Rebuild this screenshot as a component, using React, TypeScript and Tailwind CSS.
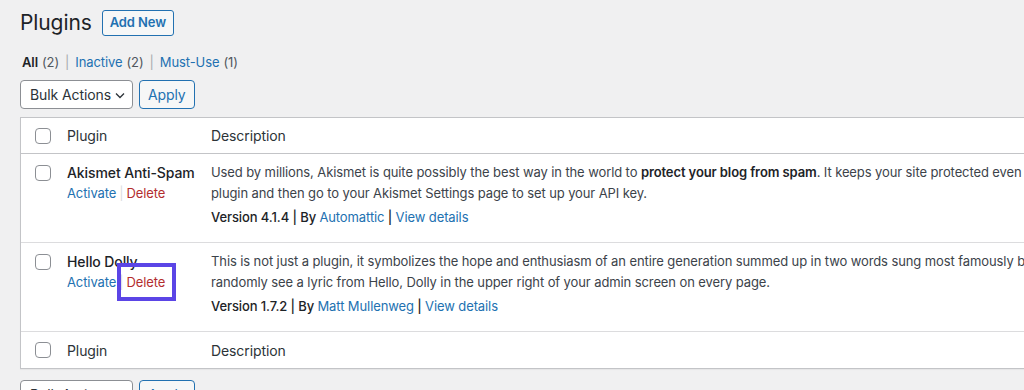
import React from "react";

const LINK = "text-[#2271b1]";

const Checkbox: React.FC = () => (
	<span className="block w-4 h-4 rounded-[4px] border border-[#8c8f94] bg-white" />
);

const BulkControls: React.FC = () => (
	<div className="flex items-center gap-[6px]">
		<div className="flex items-center justify-between w-[113px] h-[29px] pl-[9px] pr-[6px] bg-white border border-[#8c8f94] rounded-[4px] text-[14px] text-[#2c3338]">
			<span>Bulk Actions</span>
			<svg width="12" height="12" viewBox="0 0 12 12" fill="none" stroke="#2c3338" strokeWidth="1.3">
				<path d="M2 4.5 L6 8.5 L10 4.5" />
			</svg>
		</div>
		<button className="h-[29px] px-[8px] border border-[#2271b1] rounded-[4px] bg-[#f6f7f7] text-[14px] text-[#2271b1]">
			Apply
		</button>
	</div>
);

type PluginRow = {
	name: string;
	lines: React.ReactNode[];
	version: string;
	author: string;
	highlight?: boolean;
};

const plugins: PluginRow[] = [
	{
		name: "Akismet Anti-Spam",
		lines: [
			<>
				Used by millions, Akismet is quite possibly the best way in the world to{" "}
				<strong className="font-semibold text-[#1d2327]">protect your blog from spam</strong>. It keeps your site protected even when you sleep. To get started: activate the Akismet
			</>,
			<>plugin and then go to your Akismet Settings page to set up your API key.</>,
		],
		version: "4.1.4",
		author: "Automattic",
	},
	{
		name: "Hello Dolly",
		lines: [
			<>This is not just a plugin, it symbolizes the hope and enthusiasm of an entire generation summed up in two words sung most famously by Louis Armstrong: Hello, Dolly. When activated you will</>,
			<>randomly see a lyric from Hello, Dolly in the upper right of your admin screen on every page.</>,
		],
		version: "1.7.2",
		author: "Matt Mullenweg",
		highlight: true,
	},
];

const HeaderRow: React.FC<{ top?: boolean }> = ({ top }) => (
	<div className={`flex h-[36px] items-center text-[14px] text-[#2c3338] ${top ? "border-b border-[#c3c4c7]" : ""}`}>
		<div className="w-[46px] shrink-0 pl-[14px]">
			<Checkbox />
		</div>
		<div className="w-[144px] shrink-0">Plugin</div>
		<div>Description</div>
	</div>
);

export default function App() {
	return (
		<div
			className="w-[1024px] h-[390px] overflow-hidden bg-[#f0f0f1] text-[13px] text-[#3c434a] leading-[21px] tracking-[-0.1px]"
			style={{ fontFamily: "Inter, 'Noto Sans', sans-serif" }}
		>
			<div className="pl-[20px] pt-[8px]">
				<div className="flex items-center gap-[10px]">
					<h1 className="text-[21px] leading-[29px] text-[#1d2327]">Plugins</h1>
					<button className="h-[26px] px-[7px] border border-[#2271b1] rounded-[3px] bg-[#f6f7f7] text-[13px] font-semibold text-[#2271b1]">
						Add New
					</button>
				</div>

				<div className="mt-[15px] flex items-center pl-[2px] text-[13px] leading-[20px]">
					<span className="font-semibold text-[#1d2327]">All</span>
					<span className="ml-[4px] text-[#50575e]">(2)</span>
					<span className="mx-[6px] text-[#a7aaad]">|</span>
					<span className={LINK}>Inactive</span>
					<span className="ml-[4px] text-[#50575e]">(2)</span>
					<span className="mx-[6px] text-[#a7aaad]">|</span>
					<span className={LINK}>Must-Use</span>
					<span className="ml-[4px] text-[#50575e]">(1)</span>
				</div>

				<div className="mt-[8px]">
					<BulkControls />
				</div>

				<div className="mt-[8px] w-[1200px] bg-white border border-[#c3c4c7] shadow-[0_1px_1px_rgba(0,0,0,0.04)]">
					<HeaderRow top />
					{plugins.map((p) => (
						<div key={p.name} className="flex pt-[8px] pb-[14px] border-b border-[#dcdcde]">
							<div className="w-[46px] shrink-0 pl-[14px] pt-[3px]">
								<Checkbox />
							</div>
							<div className="w-[144px] shrink-0">
								<div className="font-medium text-[14px] text-[#1d2327]">{p.name}</div>
								<div className="flex items-center">
									<span className={LINK}>Activate</span>
									<span className="mx-[3px] text-[#dcdcde]">|</span>
									{p.highlight ? (
										<span className="relative text-[#b32d2e]">
											Delete
											<span className="absolute -left-[9px] -right-[11px] -top-[9px] -bottom-[8px] border-[4px] border-[#5b45e6]" />
										</span>
									) : (
										<span className="text-[#b32d2e]">Delete</span>
									)}
								</div>
							</div>
							<div className="flex-1 whitespace-nowrap">
								{p.lines.map((l, i) => (
									<div key={i}>{l}</div>
								))}
								<div className="mt-[3px] text-[#1d2327] font-medium">
									Version {p.version} | By <span className={`${LINK} font-normal`}>{p.author}</span> |{" "}
									<span className={`${LINK} font-normal`}>View details</span>
								</div>
							</div>
						</div>
					))}
					<HeaderRow />
				</div>

				<div className="mt-[11px]">
					<BulkControls />
				</div>
			</div>
		</div>
	);
}
